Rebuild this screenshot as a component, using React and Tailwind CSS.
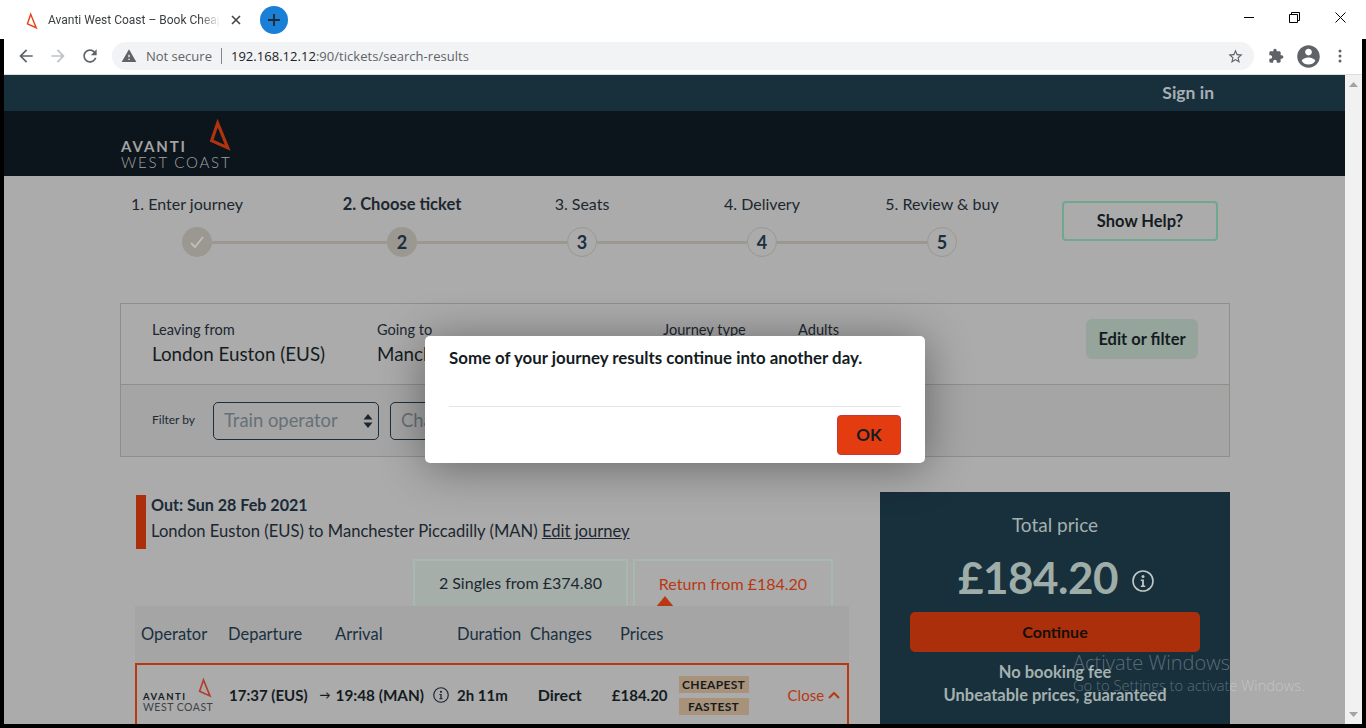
const ui = { fontFamily: '"Open Sans", sans-serif' };
const tabFont = { fontFamily: 'Roboto, "Open Sans", sans-serif' };
const site = { fontFamily: 'Lato, "Liberation Sans", sans-serif' };

function MaterialIcon({ d, size = 20, color = "#5f6368" }) {
  return (
    <svg width={size} height={size} viewBox="0 0 24 24" fill={color} className="shrink-0">
      <path d={d} />
    </svg>
  );
}

const BACK = "M20 11H7.83l5.59-5.59L12 4l-8 8 8 8 1.41-1.41L7.83 13H20v-2z";
const FORWARD = "M4 13h12.17l-5.59 5.59L12 20l8-8-8-8-1.41 1.41L16.17 11H4v2z";
const RELOAD = "M17.65 6.35C16.2 4.9 14.21 4 12 4c-4.42 0-7.99 3.58-7.99 8s3.57 8 7.99 8c3.73 0 6.84-2.55 7.73-6h-2.08c-.82 2.33-3.04 4-5.65 4-3.31 0-6-2.69-6-6s2.69-6 6-6c1.66 0 3.14.69 4.22 1.78L13 11h7V4l-2.35 2.35z";
const WARNING = "M1 21h22L12 2 1 21zm12-3h-2v-2h2v2zm0-4h-2v-4h2v4z";
const STAR = "M22 9.24l-7.19-.62L12 2 9.19 8.63 2 9.24l5.46 4.73L5.82 21 12 17.27 18.18 21l-1.63-7.03L22 9.24zM12 15.4l-3.76 2.27 1-4.28-3.32-2.88 4.38-.38L12 6.1l1.71 4.04 4.38.38-3.32 2.88 1 4.28L12 15.4z";
const PUZZLE = "M20.5 11H19V7c0-1.1-.9-2-2-2h-4V3.5C13 2.12 11.88 1 10.5 1S8 2.12 8 3.5V5H4c-1.1 0-1.99.9-1.99 2v3.8H3.5c1.49 0 2.7 1.21 2.7 2.7s-1.21 2.7-2.7 2.7H2V20c0 1.1.9 2 2 2h3.8v-1.5c0-1.49 1.21-2.7 2.7-2.7 1.49 0 2.7 1.21 2.7 2.7V22H17c1.1 0 2-.9 2-2v-4h1.5c1.38 0 2.5-1.12 2.5-2.5S21.88 11 20.5 11z";
const ACCOUNT = "M12 2C6.48 2 2 6.48 2 12s4.48 10 10 10 10-4.48 10-10S17.52 2 12 2zm0 3c1.66 0 3 1.34 3 3s-1.34 3-3 3-3-1.34-3-3 1.34-3 3-3zm0 14.2c-2.5 0-4.71-1.28-6-3.22.03-1.99 4-3.08 6-3.08 1.99 0 5.97 1.09 6 3.08-1.29 1.94-3.5 3.22-6 3.22z";

function LogoMark({ width, height, color, stroke = 3 }) {
  return (
    <svg width={width} height={height} viewBox="0 0 21 32" fill="none" className="shrink-0">
      <path d="M8.2 4 L2.4 21 L18 28 Z" stroke={color} strokeWidth={stroke} strokeLinejoin="miter" />
    </svg>
  );
}

function InfoIcon({ size, color }) {
  return (
    <svg width={size} height={size} viewBox="0 0 22 22" fill="none" className="shrink-0">
      <circle cx="11" cy="11" r="10" stroke={color} strokeWidth="1.6" />
      <circle cx="11" cy="6.6" r="1.5" fill={color} />
      <path d="M8.8 9.6h3.1v6h1.3v1.4H8.8v-1.4h1.3v-4.6H8.8z" fill={color} />
    </svg>
  );
}

function BrowserChrome() {
  return (
    <div className="h-[39px] shrink-0 flex items-center bg-white" style={ui}>
      <div className="ml-[26px] mt-[2px]">
        <LogoMark width={12} height={18} color="#e8431a" stroke={2.6} />
      </div>
      <div className="ml-[10px] w-[172px] h-[20px] overflow-hidden whitespace-nowrap text-[12px] leading-[20px] text-[#3c4043] [mask-image:linear-gradient(90deg,black_88%,transparent)]" style={tabFont}>
        Avanti West Coast – Book Cheap Train Tickets
      </div>
      <svg width="10" height="10" viewBox="0 0 10 10" className="ml-[11px]" stroke="#444" strokeWidth="1.6">
        <path d="M1 1l8 8M9 1l-8 8" />
      </svg>
      <div className="ml-[19px] w-[28px] h-[28px] rounded-full bg-[#1a7fd6] flex items-center justify-center">
        <svg width="12" height="12" viewBox="0 0 12 12" stroke="#1f2a36" strokeWidth="1.8">
          <path d="M6 0v12M0 6h12" />
        </svg>
      </div>
      <div className="ml-auto flex items-center mb-[5px]">
        <div className="w-[10px] h-px bg-black" />
        <svg width="11" height="11" viewBox="0 0 11 11" fill="none" stroke="#000" className="ml-[35px]">
          <path d="M.5 2.5h8v8h-8zM2.5 2.5v-2h8v8h-2" />
        </svg>
        <svg width="11" height="11" viewBox="0 0 11 11" fill="none" stroke="#000" className="ml-[35px] mr-[20px]">
          <path d="M.5.5l10 10M10.5.5l-10 10" />
        </svg>
      </div>
    </div>
  );
}

function Toolbar() {
  return (
    <div className="h-[36px] shrink-0 bg-white border-b border-[#dadce0] flex items-center pb-[1px]" style={ui}>
      <div className="ml-[12px]"><MaterialIcon d={BACK} size={20} /></div>
      <div className="ml-[12px]"><MaterialIcon d={FORWARD} size={20} color="#bdc1c6" /></div>
      <div className="ml-[12px]"><MaterialIcon d={RELOAD} size={20} /></div>
      <div className="ml-[12px] w-[1142px] h-[28px] rounded-full bg-[#f1f3f4] flex items-center">
        <div className="ml-[9px]"><MaterialIcon d={WARNING} size={16} /></div>
        <span className="ml-[9px] text-[13px] text-[#5f6368] mt-[2px]">Not secure</span>
        <div className="ml-[9px] w-px h-[16px] bg-[#80868b]" />
        <span className="ml-[9px] text-[13px] text-[#202124] mt-[2px] tracking-[0.03px]">
          192.168.12.12<span className="text-[#5f6368]">:90/tickets/search-results</span>
        </span>
        <div className="ml-auto mr-[10px]"><MaterialIcon d={STAR} size={17} /></div>
      </div>
      <div className="ml-[14px]"><MaterialIcon d={PUZZLE} size={16} /></div>
      <div className="ml-[11px]"><MaterialIcon d={ACCOUNT} size={27} /></div>
      <svg width="4" height="14" viewBox="0 0 4 14" fill="#5f6368" className="ml-[16px]">
        <circle cx="2" cy="2" r="1.5" />
        <circle cx="2" cy="7" r="1.5" />
        <circle cx="2" cy="12" r="1.5" />
      </svg>
    </div>
  );
}

function Stepper() {
  return (
    <div className="flex h-[127px]">
      <div className="w-[942px] shrink-0 pt-[18px]">
        <div className="flex text-[16px] leading-[20px] text-[#1c2730]">
          <div className="w-[134px] text-center">1. Enter journey</div>
          <div className="ml-[58px] w-[180px] text-center font-bold text-[16.5px]">2. Choose ticket</div>
          <div className="w-[180px] text-center">3. Seats</div>
          <div className="w-[180px] text-center">4. Delivery</div>
          <div className="w-[180px] text-center">5. Review &amp; buy</div>
        </div>
        <div className="flex items-center ml-[62px] mt-[13px] w-[775px] text-[#1a3040] font-bold text-[18px]">
          <div className="w-[30px] h-[30px] rounded-full bg-[#9b9892] flex items-center justify-center">
            <svg width="14" height="12" viewBox="0 0 14 12" fill="none" stroke="#bdbdbb" strokeWidth="2">
              <path d="M1 7l4 4 8-10" />
            </svg>
          </div>
          <div className="w-[175px] h-[3px] bg-[#9b9892]" />
          <div className="w-[30px] h-[30px] rounded-full bg-[#9b9892] flex items-center justify-center">2</div>
          <div className="w-[150px] h-[3px] bg-[#9b9892]" />
          <div className="w-[30px] h-[30px] rounded-full border border-[#9b9892] flex items-center justify-center">3</div>
          <div className="w-[150px] h-[3px] bg-[#9b9892]" />
          <div className="w-[30px] h-[30px] rounded-full border border-[#9b9892] flex items-center justify-center">4</div>
          <div className="w-[150px] h-[3px] bg-[#9b9892]" />
          <div className="w-[30px] h-[30px] rounded-full border border-[#9b9892] flex items-center justify-center">5</div>
        </div>
      </div>
      <div className="mt-[25px] w-[156px] h-[40px] border-2 border-[#6fa88f] rounded-[4px] flex items-center justify-center whitespace-nowrap font-bold text-[16.5px] text-[#141c22]">
        Show Help?
      </div>
    </div>
  );
}

function SummaryField({ label, value, width }) {
  return (
    <div className={width}>
      <div className="text-[14.6px] leading-[18px] text-[#1c2730]">{label}</div>
      <div className="mt-[3px] text-[18.8px] leading-[24px] whitespace-nowrap text-[#141c22]">{value}</div>
    </div>
  );
}

function FilterSelect({ label }) {
  return (
    <div className="w-[166px] h-[38px] border border-[#1a3040] rounded-[5px] flex items-center justify-between pl-[10px] pr-[5px] text-[18.4px] text-[#677076]">
      {label}
      <svg width="10" height="14" viewBox="0 0 10 14" fill="#1c2730">
        <path d="M5 0l4.5 5.5h-9zM5 14L.5 8.5h9z" />
      </svg>
    </div>
  );
}

function JourneySummary() {
  return (
    <div className="h-[154px] border border-[#918e8a] flex flex-col">
      <div className="h-[81px] shrink-0 flex border-b border-[#918e8a] pl-[31px] pt-[17px]">
        <SummaryField label="Leaving from" value="London Euston (EUS)" width="w-[225px]" />
        <SummaryField label="Going to" value="Manchester Piccadilly (MAN)" width="w-[286px]" />
        <SummaryField label="Journey type" width="w-[135px]" />
        <SummaryField label="Adults" width="w-[288px]" />
        <div className="-mt-[2px] w-[112px] h-[40px] rounded-[6px] bg-[#95a59b] flex items-center justify-center font-bold text-[16.5px] text-[#141c22]">
          Edit or filter
        </div>
      </div>
      <div className="flex-1 bg-[#a5a5a5] flex items-center pl-[31px]">
        <span className="w-[61px] mb-[1px] text-[12px] text-[#1a2a36]">Filter by</span>
        <FilterSelect label="Train operator" />
        <div className="ml-[11px]"><FilterSelect label="Changes" /></div>
      </div>
    </div>
  );
}

function TicketTabs() {
  return (
    <div className="flex h-[47px] ml-[278px] gap-[5px] text-[16px]">
      <div className="w-[215px] border-2 border-b-0 border-[#a7b8ae] bg-[#a6aeaa] flex items-center justify-center text-[#1c2730] pb-[2px]">
        2 Singles from £374.80
      </div>
      <div className="w-[200px] border-2 border-b-0 border-[#a7b8ae] flex flex-col items-center text-[#b83812]">
        <div className="mt-[13px] leading-[20px]">Return from £184.20</div>
        <svg width="18" height="11" viewBox="0 0 18 11" fill="#b83812" className="mt-[2px] mr-[136px]">
          <path d="M9 0l9 11H0z" />
        </svg>
      </div>
    </div>
  );
}

function ResultRow() {
  return (
    <div className="h-[80px] border-2 border-[#b83812] flex text-[#141c22] font-bold text-[15px]">
      <div className="ml-[6px] w-[86px] h-[44px] shrink-0">
        <div className="relative h-[44px] font-normal">
          <div className="pt-[27px] text-[9.5px] leading-[10px] font-bold tracking-[1.5px] text-[#141c22]">AVANTI</div>
          <div className="text-[10.5px] leading-[11px] tracking-[0.5px] whitespace-nowrap text-[#3c4246]">WEST COAST</div>
          <div className="absolute left-[55px] top-[12px]">
            <LogoMark width={14} height={22} color="#b0402a" stroke={2.5} />
          </div>
        </div>
      </div>
      <div className="h-[60px] flex items-center whitespace-nowrap">
        <span>17:37 (EUS)</span>
        <span className="ml-[12px] text-[11px]">→</span>
        <span className="ml-[5px] text-[15.3px]">19:48 (MAN)</span>
        <div className="ml-[9px]"><InfoIcon size={16} color="#1c2730" /></div>
        <span className="ml-[8px]">2h 11m</span>
        <span className="ml-[30px] text-[16px]">Direct</span>
        <span className="ml-[30px]">£184.20</span>
        <div className="ml-[11px] w-[70px] flex flex-col gap-[5px] text-[12px] leading-[17px] text-center">
          <div className="bg-[#a8937a] tracking-[0.3px]">CHEAPEST</div>
          <div className="bg-[#a8937a] tracking-[0.3px]">FASTEST</div>
        </div>
        <span className="ml-[39px] font-normal text-[15px] text-[#b83812]">Close</span>
        <svg width="12" height="8" viewBox="0 0 12 8" fill="none" stroke="#b83812" strokeWidth="2" className="ml-[4px]">
          <path d="M1 7l5-5 5 5" />
        </svg>
      </div>
    </div>
  );
}

function Results() {
  return (
    <div className="w-[714px] ml-[15px] shrink-0">
      <div className="flex h-[54px] mt-[38px]">
        <div className="ml-[1px] w-[10px] bg-[#ac2f0b] shrink-0" />
        <div className="ml-[5px] text-[#1a2a36]">
          <div className="font-bold text-[16.1px] leading-[20px]">Out: Sun 28 Feb 2021</div>
          <div className="mt-[6px] text-[16.6px] leading-[20px] whitespace-nowrap text-[#1c2730]">
            London Euston (EUS) to Manchester Piccadilly (MAN) <span className="underline">Edit journey</span>
          </div>
        </div>
      </div>
      <div className="mt-[10px]"><TicketTabs /></div>
      <div className="h-[57px] bg-[#a5a5a5] flex items-center text-[16.5px] text-[#1a3040] pl-[6px] pb-[1px]">
        <span className="w-[87px]">Operator</span>
        <span className="w-[107px]">Departure</span>
        <span className="w-[122px]">Arrival</span>
        <span className="w-[73px]">Duration</span>
        <span className="w-[90px]">Changes</span>
        <span>Prices</span>
      </div>
      <ResultRow />
    </div>
  );
}

function PricePanel() {
  return (
    <div className="ml-[31px] mt-[35px] w-[350px] h-[300px] bg-[#182f3c] flex flex-col items-center text-[#a4b1ae]">
      <div className="mt-[21px] text-[19px] leading-[24px]">Total price</div>
      <div className="mt-[12px] flex items-center h-[56px] pl-[2px]">
        <span className="font-bold text-[44px] leading-[56px] tracking-[-0.5px] text-[#9fada8]">£184.20</span>
        <div className="ml-[14px] mt-[8px]"><InfoIcon size={22} color="#c0c8c6" /></div>
      </div>
      <div className="mt-[7px] w-[290px] h-[40px] rounded-[5px] bg-[#ac2f0b] flex items-center justify-center font-bold text-[16px] text-[#141008]">
        Continue
      </div>
      <div className="mt-[9px] font-bold text-[16.5px] leading-[23px]">No booking fee</div>
      <div className="font-bold text-[16.5px] leading-[23px]">Unbeatable prices, guaranteed</div>
    </div>
  );
}

function Page() {
  return (
    <div className="w-[1341px] shrink-0 bg-[#ababab] overflow-hidden" style={site}>
      <div className="h-[36px] bg-[#182f3c] flex items-center justify-end pr-[131px] pt-[1px] font-bold text-[17.5px] text-[#a7afb3]">
        Sign in
      </div>
      <div className="h-[65px] bg-[#0d151c] relative">
        <div className="ml-[117px] pt-[27px] text-[#a3a3a3] whitespace-nowrap">
          <div className="text-[15px] leading-[16px] font-bold tracking-[1.9px]">AVANTI</div>
          <div className="text-[15px] leading-[16px] font-light tracking-[1.8px]">WEST COAST</div>
        </div>
        <div className="absolute left-[205px] top-[8px]">
          <LogoMark width={22} height={33} color="#b2340f" stroke={3} />
        </div>
      </div>
      <div className="ml-[116px] w-[1110px]">
        <Stepper />
        <JourneySummary />
        <div className="flex">
          <Results />
          <PricePanel />
        </div>
      </div>
    </div>
  );
}

function Scrollbar() {
  return (
    <div className="w-[17px] shrink-0 bg-[#f1f1f1] flex flex-col items-center justify-between py-[7px]">
      <svg width="9" height="5" viewBox="0 0 9 5" fill="#a3a3a3"><path d="M4.5 0L9 5H0z" /></svg>
      <svg width="9" height="5" viewBox="0 0 9 5" fill="#a3a3a3"><path d="M4.5 5L0 0h9z" /></svg>
    </div>
  );
}

function Modal() {
  return (
    <div className="absolute left-[425px] top-[336px] w-[500px] h-[127px] bg-white rounded-[5px] shadow-[0_4px_45px_rgba(0,0,0,0.4)] px-[24px] text-[#141c22]" style={site}>
      <div className="h-[71px] border-b border-[#e5e5e5] pt-[11px] font-bold text-[16.85px] leading-[22px]">
        Some of your journey results continue into another day.
      </div>
      <div className="flex justify-end pt-[8px]">
        <div className="w-[64px] h-[40px] bg-[#e43c11] border border-[#c8363a] rounded-[4px] flex items-center justify-center font-bold text-[17px]">
          OK
        </div>
      </div>
    </div>
  );
}

export default function App() {
  return (
    <div className="relative w-[1366px] h-[728px] overflow-hidden bg-white flex flex-col">
      <BrowserChrome />
      <div className="flex-1 min-h-0 bg-black px-[4px] pb-[4px] flex flex-col">
        <Toolbar />
        <div className="flex-1 min-h-0 flex">
          <Page />
          <Scrollbar />
        </div>
      </div>
      <Modal />
      <div className="absolute left-[1073px] top-[650px] text-white/30 font-light whitespace-nowrap" style={ui}>
        <div className="text-[20px] leading-[26px]">Activate Windows</div>
        <div className="text-[14.7px] leading-[18px]">Go to Settings to activate Windows.</div>
      </div>
    </div>
  );
}
